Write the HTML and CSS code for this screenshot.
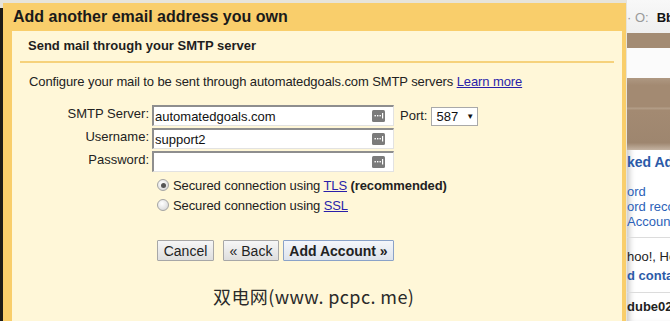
FILE: index.html
```html
<!DOCTYPE html>
<html>
<head>
<meta charset="utf-8">
<link rel="stylesheet" href="styles.css">
</head>
<body>
<div class="screen">
  <div class="leftstrip"></div>
  <div class="dialog">
    <div class="title">Add another email address you own</div>
    <div class="content">
      <div class="subtitle">Send mail through your SMTP server</div>
      <div class="rule"></div>
      <p class="intro">Configure your mail to be sent through automatedgoals.com SMTP servers <a href="#">Learn more</a></p>
      <div class="form">
        <label class="lbl">SMTP Server:</label>
        <div class="field"><span class="val">automatedgoals.com</span><svg class="pm" viewBox="0 0 13 12"><rect x="0" y="0" width="13" height="12" rx="1.5" fill="#7b7b7b"/><rect x="2.5" y="5" width="1.4" height="1.4" fill="#fff"/><rect x="5" y="5" width="1.4" height="1.4" fill="#fff"/><rect x="7.5" y="5" width="1.4" height="1.4" fill="#fff"/><rect x="10" y="3" width="1.2" height="5.5" fill="#fff"/></svg></div>
        <div class="port"><span class="plbl">Port:</span><span class="select">587<span class="arrow">▼</span></span></div>
        <label class="lbl">Username:</label>
        <div class="field"><span class="val">support2</span><svg class="pm" viewBox="0 0 13 12"><rect x="0" y="0" width="13" height="12" rx="1.5" fill="#7b7b7b"/><rect x="2.5" y="5" width="1.4" height="1.4" fill="#fff"/><rect x="5" y="5" width="1.4" height="1.4" fill="#fff"/><rect x="7.5" y="5" width="1.4" height="1.4" fill="#fff"/><rect x="10" y="3" width="1.2" height="5.5" fill="#fff"/></svg></div>
        <div></div>
        <label class="lbl">Password:</label>
        <div class="field"><span class="val"></span><svg class="pm" viewBox="0 0 13 12"><rect x="0" y="0" width="13" height="12" rx="1.5" fill="#7b7b7b"/><rect x="2.5" y="5" width="1.4" height="1.4" fill="#fff"/><rect x="5" y="5" width="1.4" height="1.4" fill="#fff"/><rect x="7.5" y="5" width="1.4" height="1.4" fill="#fff"/><rect x="10" y="3" width="1.2" height="5.5" fill="#fff"/></svg></div>
        <div></div>
      </div>
      <div class="radios">
        <div class="radio"><span class="dot checked"></span><span>Secured connection using <a href="#">TLS</a> <b>(recommended)</b></span></div>
        <div class="radio"><span class="dot"></span><span>Secured connection using <a href="#">SSL</a></span></div>
      </div>
      <div class="buttons">
        <button class="btn cancel">Cancel</button>
        <button class="btn back">« Back</button>
        <button class="btn primary">Add Account »</button>
      </div>
      <div class="watermark">双电网(www. pcpc. me)</div>
    </div>
  </div>
  <div class="page">
    <div class="phead"><span class="pgrey">· O:</span><span class="pbold">Bb</span></div>
    <div class="pband1"></div>
    <div class="pwhite"></div>
    <div class="pimage"></div>
    <div class="ptitle">ked Add</div>
    <div class="plinks"><div>ord</div><div>ord reco</div><div>Account</div></div>
    <div class="psep"></div>
    <div class="ptext">hoo!, Ho</div>
    <div class="pblue">d conta</div>
    <div class="psep2"></div>
    <div class="ptext bold">dube02</div>
  </div>
</div>
</body>
</html>
```
FILE: styles.css
```css
* { box-sizing: border-box; }
html, body { margin: 0; padding: 0; }
body {
  width: 670px; height: 321px; overflow: hidden;
  font-family: "Liberation Sans", Arial, sans-serif;
  font-size: 13px; color: #222;
  background: #e7e4da;
}
.screen { display: flex; width: 670px; height: 321px; }
.leftstrip { width: 3px; margin-top: 8px; background: #1c1a16; flex: none; }
.dialog {
  width: 623px; flex: none; margin-top: 3px;
  background: #f9ce6b;
  padding: 0 4px 0 9px;
  display: flex; flex-direction: column;
}
.title {
  height: 28px; line-height: 28px;
  font-size: 16px; font-weight: bold; color: #1a1a1a;
  padding-left: 1px;
}
.content {
  flex: 1; background: #fff7d8;
  padding: 7px 0 0 0;
}
.subtitle {
  font-size: 13px; font-weight: bold; color: #1e1e1e;
  padding-left: 16px; line-height: 16px;
}
.rule { height: 2px; background: #f6d27c; margin: 7px 8px 0 8px; }
.intro { margin: 11px 0 0 17px; line-height: 16px; color: #222; letter-spacing: -0.1px; }
a { color: #2a1faa; text-decoration: underline; }
.form {
  display: grid;
  grid-template-columns: 137px 242px auto;
  grid-auto-rows: 21px;
  row-gap: 2px;
  margin-top: 15px;
}
.lbl { text-align: right; line-height: 17px; color: #222; }
.field {
  margin-left: 3px; width: 242px; height: 21px;
  background: #fff;
  border-style: solid; border-width: 2px 1px 1px 2px;
  border-color: #8e8e8e #e2e2e2 #e2e2e2 #8e8e8e;
  display: flex; align-items: center; justify-content: space-between;
  padding: 0 8px 0 1px;
}
.val { font-size: 13px; color: #111; line-height: 17px; }
.pm { width: 13px; height: 12px; }
.port { display: flex; align-items: center; padding-left: 9px; height: 21px; }
.plbl { margin-right: 4px; }
.select {
  display: inline-flex; align-items: center;
  width: 47px; height: 19px; margin-top: 1px;
  border: 1px solid #a9a9a9; background: #fff;
  padding-left: 4px; color: #111;
}
.arrow { font-size: 8px; margin-left: 8px; }
.radios { margin: 3px 0 0 145px; letter-spacing: -0.1px; }
.radio { display: flex; align-items: center; height: 20px; color: #222; white-space: nowrap; }
.radio b { font-weight: bold; }
.dot {
  width: 12px; height: 12px; border-radius: 50%;
  border: 1px solid #a4a4a4;
  background: radial-gradient(circle at 40% 35%, #fff 0, #e6e6e6 55%, #cfcfcf 100%);
  margin-right: 4px; position: relative; flex: none;
}
.dot.checked::after {
  content: ""; position: absolute; left: 2.5px; top: 2.5px;
  width: 5px; height: 5px; border-radius: 50%; background: #555;
}
.buttons { display: flex; margin: 25px 0 0 145px; }
.btn {
  font-family: "Liberation Sans", Arial, sans-serif;
  font-size: 14px; color: #222; white-space: nowrap;
  height: 21px; padding: 0 4px; margin: 0;
  border: 1px solid #a7a7a7; border-radius: 1px;
  background: linear-gradient(#f6f6f6, #dedede);
  line-height: 18px;
}
.cancel { width: 57px; }
.back { margin-left: 9px; width: 56px; }
.primary {
  margin-left: 4px; width: 111px; font-weight: bold;
  border-color: #8aa2c8;
  background: linear-gradient(#f4f6fa, #dde3ec);
}
.watermark {
  font-family: "Noto Sans CJK SC", "DejaVu Sans", sans-serif;
  font-size: 18px; color: #2a2a2a;
  margin: 22px 0 0 201px; line-height: 26px; letter-spacing: 0.4px;
  white-space: nowrap;
}
.page {
  flex: 1; margin-left: 1px; background: #fff;
  box-shadow: inset 6px 0 6px -4px rgba(0,0,0,0.25);
  overflow: hidden; white-space: nowrap;
  font-size: 13px;
}
.phead {
  height: 33px; background: linear-gradient(#f8f8f8, #efefef);
  display: flex; align-items: center; padding-top: 2px;
}
.pgrey { color: #9a9a9a; margin-right: 8px; }
.pbold { font-weight: bold; color: #111; }
.pband1 { height: 15px; background: #a38b73; }
.pwhite { height: 30px; background: #fbfbfb; }
.pimage {
  height: 72px;
  background: linear-gradient(#ae9882 0, #a38a72 10%, #a38a72 40%, #b39e88 42%, #a38a72 45%, #9e866f 90%, #c4b3a2 100%);
}
.ptitle { color: #2b5aa8; font-weight: bold; font-size: 14px; line-height: 22px; margin-top: 1px; }
.plinks { color: #2d62b8; line-height: 15px; margin-top: 11px; }
.psep { height: 1px; background: #dcdcdc; margin-top: 8px; }
.ptext { color: #222; line-height: 18px; margin-top: 10px; }
.pblue { color: #2b5aa8; font-weight: bold; line-height: 18px; margin-top: 1px; }
.psep2 { height: 1px; background: #dcdcdc; margin-top: 7px; }
.ptext.bold { font-weight: bold; margin-top: 5px; }
```
